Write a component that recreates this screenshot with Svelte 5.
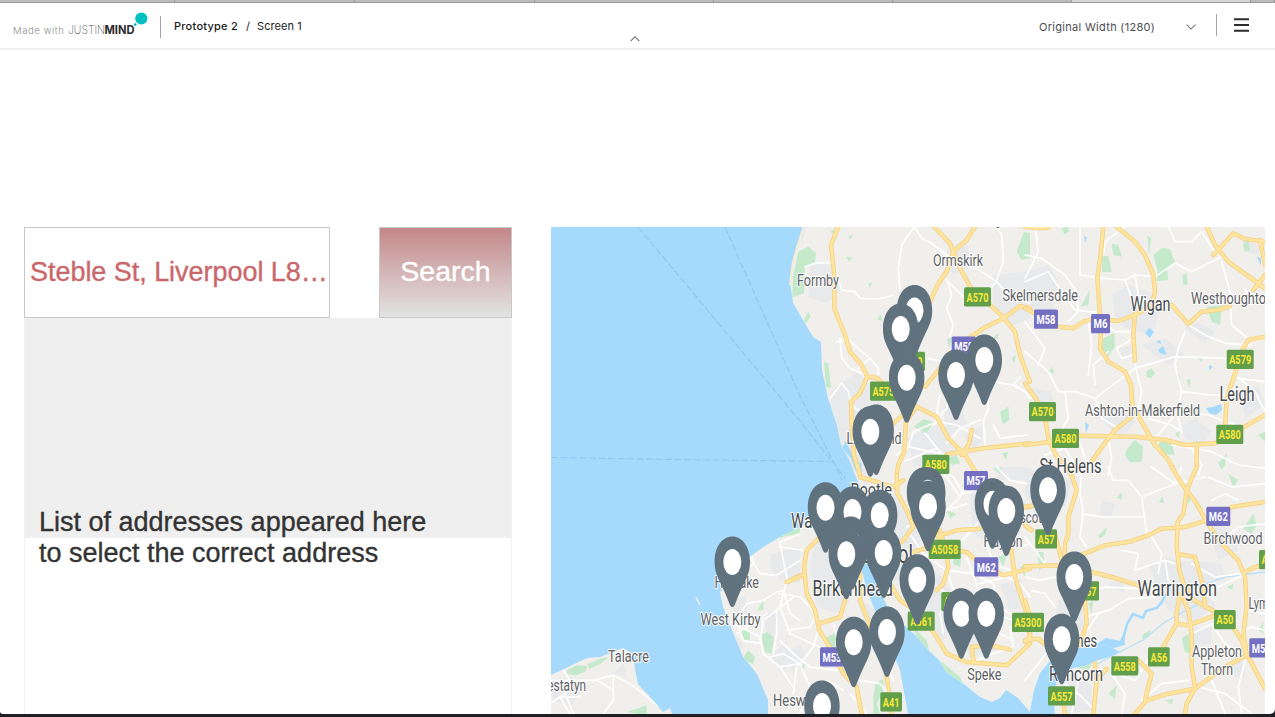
<script>
  const tabs = [175, 180, 180, 179, 179, 179, 179, 24];

  // Pin positions are the centres of the white holes, listed back to front.
  const pins = [
    [914.5, 310.5], [900.7, 329], [906.7, 377.7], [984.3, 360], [956, 375],
    [876.2, 430], [870.3, 431.7],
    [825.5, 507.7], [852.5, 512], [879.7, 515.3],
    [850.7, 542], [852, 544.5], [846.3, 554.3], [883.7, 553],
    [924.5, 492.7], [927.8, 492.7], [928, 506.3],
    [992.5, 503.7], [1006.3, 511], [1048, 490.3], [917.3, 579.7],
    [961.3, 613.7], [986.3, 613.7], [1074.3, 577], [1061.7, 639.3],
    [853.7, 642.3], [887, 632], [822, 706], [732.3, 562]
  ];

  // name, left, baseline, width, size
  const places = [
    ['Burscough', 955, 224.5, 52, 16], ['Formby', 797, 285.5, 42, 17], ['Ormskirk', 933, 266, 50, 17],
    ['Skelmersdale', 1002.5, 300.7, 75.5, 17], ['Westhoughton', 1191, 303.7, 82, 17],
    ['Ashton-in-Makerfield', 1085, 415.7, 115, 17],
    ['Birchwood', 1203.5, 543.7, 59, 17], ['Lymm', 1248.5, 608.5, 30, 17],
    ['Appleton', 1192, 656.5, 50, 17], ['Thorn', 1201, 674.5, 32, 17],
    ['Huyton', 983.5, 546.5, 39, 17], ['Prescot', 1003, 522.5, 39, 17], ['Speke', 967.3, 680, 34, 17],
    ['Heswall', 773, 705.5, 46, 17], ['Litherland', 846.5, 443.5, 55, 17],
    ['Hoylake', 714.5, 587.5, 44.5, 17], ['West Kirby', 700.5, 625, 60, 17],
    ['Talacre', 608, 662, 41, 17], ['Prestatyn', 536, 690.5, 50, 17]
  ];
  const towns = [
    ['Wigan', 1130.5, 310.7, 40, 20], ['Leigh', 1219.5, 401, 35, 20.5], ['St Helens', 1039.5, 473, 62, 19.5],
    ['Warrington', 1137.5, 595.5, 79.5, 22], ['Widnes', 1055, 647, 42, 18.5], ['Runcorn', 1049, 681.3, 54, 19.5],
    ['Birkenhead', 812.5, 595.5, 80.5, 22], ['Bootle', 850.5, 496, 41.5, 18.5], ['Wallasey', 791, 527.5, 60, 20],
    ['Liverpool', 838, 562.5, 75, 26]
  ];

  // label, x, y, width
  const shields = [
    ['A570', 964, 287.3, 27], ['M58', 1034, 309.5, 24], ['M6', 1091, 314, 19], ['A579', 1226.7, 349.7, 27],
    ['A570', 1029, 402, 27], ['A580', 1052, 428.7, 27], ['A580', 1216.3, 424.7, 27], ['M58', 951.7, 336.5, 24],
    ['A59', 903.5, 351.7, 21.5], ['A5758', 870, 381.5, 32], ['A580', 922.3, 454.7, 27], ['M57', 964, 471, 24],
    ['A5058', 928.7, 539.7, 32], ['M62', 974.3, 557.3, 24], ['A561', 907.7, 611.5, 27], ['A562', 941.3, 592, 27],
    ['A5300', 1012, 612.7, 32], ['A41', 880.3, 692.3, 21.7], ['M53', 820, 647.3, 24], ['A57', 1035.3, 529.2, 21.7],
    ['A557', 1072, 581.3, 27], ['A557', 1048, 686.2, 27], ['A558', 1111.3, 656.3, 27], ['A56', 1148, 647.3, 21.7],
    ['A50', 1214, 610, 21.7], ['M62', 1206.3, 506.7, 24], ['M56', 1249.3, 638.3, 24], ['A57', 1259, 550, 21.7]
  ];

  // Each map tile is drawn on its own 750-unit grid.
  const tiles = [
    {
      at: [780, 225],
      urban: ['M90 120L150 110L190 190L140 235L85 215Z', 'M510 60L560 50L575 120L520 150L490 100Z', 'M640 150L740 140L750 280L700 300L640 250Z', 'M150 500L230 440L290 500L330 620L290 750L215 750L165 610Z', 'M490 545L540 530L560 600L500 640Z', 'M380 640L470 600L540 680L480 740L400 720Z', 'M555 630L610 600L605 650L570 690Z', 'M60 0L80 0L65 60Z'],
      green: ['M55 80L85 65L108 85L105 115L75 125L72 205L36 218L40 150Z', 'M70 290L85 258L92 275L78 295Z', 'M132 410L145 415L153 490L138 485Z', 'M150 20L165 12L163 28Z', 'M205 35L220 28L212 43Z', 'M197 95L216 98L207 110Z', 'M265 175L278 172L270 187Z', 'M291 283L302 268L307 288Z', 'M710 80L732 20L750 25L750 100L725 105Z', 'M638 340L653 325L655 343Z', 'M500 345L515 335L510 370Z', 'M660 560L685 545L688 585L668 598Z', 'M400 605L430 583L462 590L440 625Z', 'M695 400L707 390L704 415Z', 'M665 685L685 680L678 705Z', 'M500 700L530 690L540 715L515 720Z'],
      minor: ['M75 125L105 115L160 112L185 195L225 200L240 220L300 222L340 210', 'M405 8L425 40L455 55L500 90', 'M400 8L365 60L355 130L360 190', 'M500 165L515 210L500 250L520 300L510 335', 'M500 90L590 130L650 170L690 215L750 235', 'M500 165L550 215', 'M650 165L670 110L665 30L650 8', 'M650 170L630 190', 'M180 340L185 400L210 430L260 450', 'M170 350L205 345L270 400L295 430L295 480', 'M270 400L235 430', 'M150 520L185 475L205 500L213 540', 'M445 400L490 410L560 430L610 465L700 480L720 455', 'M620 470L625 550L610 590L615 660', 'M350 690L385 665L450 680L510 690', 'M385 665L400 620L470 590L530 600L600 640', 'M500 655L540 610L600 585', 'M435 625L480 680L490 740', 'M640 600L660 640L740 630', 'M370 710L470 670', 'M480 510L470 560L490 600', 'M700 480L735 500L750 520', 'M215 540L260 575L320 590', 'M460 600L500 550L515 490'],
      roads: ['M175 5L153 60L163 150L163 250L195 330L210 380L245 420L262 455L290 458L330 500L410 545L470 575L505 640L555 690L590 745', 'M262 455L240 505L213 530L215 600L222 690L240 750', 'M462 5L510 55L520 80L500 140L475 175L450 230L410 300', 'M585 5L560 45L520 80L540 130L570 185L665 272L705 320L720 390L750 470', 'M410 545L378 590L372 680L355 720L350 750', 'M380 560L340 595', 'M435 485L500 405L530 365L610 310L670 280L720 243L750 250', 'M500 688L610 670L750 655', 'M575 615L568 655L545 690']
    },
    {
      at: [1025, 225],
      urban: ['M0 140L70 120L100 170L80 270L0 250Z', 'M260 210L310 180L370 200L410 250L380 330L300 310L270 270Z', 'M480 310L520 290L570 320L540 355Z', 'M220 580L290 540L330 590L290 640Z', 'M470 600L510 580L560 620L530 660L480 640Z', 'M350 360L420 340L480 390L430 420Z', 'M640 500L700 480L720 540L660 580Z', 'M280 370L320 360L320 400L290 400Z', 'M650 40L700 60L700 90L660 80Z', 'M20 490L80 500L90 545L30 550Z'],
      green: ['M398 140L385 90L410 68L435 72L450 110L425 130L430 165L395 168Z', 'M230 95L250 92L260 140L232 142Z', 'M260 55L280 60L290 95L265 90Z', 'M167 245L195 195L190 240Z', 'M545 245L590 240L585 300L560 290Z', 'M235 340L268 325L270 365L245 400L228 370Z', 'M307 670L330 645L355 665L350 710L315 712L300 690Z', 'M400 655L440 640L448 690L405 685Z', 'M364 440L380 430L390 445L378 460L365 455Z', 'M70 440L82 425L88 445Z', 'M580 715L605 685L600 720L590 735Z', 'M367 30L378 40L372 92Z', 'M654 60L668 40L675 75L660 80Z', 'M472 150L485 145L488 180L475 180Z', 'M110 10L128 5L132 20L118 28Z', 'M450 625L465 618L460 640Z', 'M518 400L530 395L530 412Z', 'M700 630L720 620L720 650Z', 'M485 465L497 462L493 490Z'],
      minor: ['M0 90L50 100L120 150L155 200L160 260L130 290', 'M30 5L40 80L0 160', 'M0 170L70 140L110 200L150 255L215 262', 'M165 150L240 160L300 165L330 150L390 155L450 115L500 140L560 110L600 90', 'M165 150L165 5', 'M300 165L320 220', 'M330 150L340 210L400 250', 'M430 5L450 50L500 50L530 20L570 80', 'M480 320L460 370L450 420L470 500L455 560L470 620', 'M490 300L540 330L600 355L680 360', 'M0 380L70 440L100 500L150 500L210 520L330 430L450 395L610 400', 'M210 480L205 420L250 380', 'M330 410L335 440L350 500L340 550', 'M275 370L325 340L325 390L290 400L275 370', 'M245 300L270 320L330 320', 'M590 110L615 200L620 300L680 350L720 340', 'M660 190L680 240', 'M190 290L200 360L190 450', 'M120 500L130 580L100 630', 'M210 520L230 580L280 610', 'M390 640L460 560L550 570L630 600', 'M470 500L560 510L600 510', 'M250 640L260 700L250 750', 'M160 640L180 700L210 750', 'M440 660L560 680L640 720L720 730', 'M500 670L530 720L520 750', 'M640 460L720 470', 'M300 5L240 50L235 90', 'M0 290L60 370L40 420', 'M620 440L690 500L720 560', 'M60 690L120 670L150 720L160 750', 'M370 580L440 600L470 620'],
      roads: ['M235 5L228 80L217 160L222 230L228 320L225 370L250 410L300 440L318 480L322 540L355 600L390 660L430 705L445 730', 'M275 5L330 50L360 90L385 150L390 200L380 240L330 270L280 288L210 280L175 290L145 310L100 305L40 270L0 250', 'M330 265L325 330L330 408', 'M440 240L490 297L530 260L580 255L615 243', 'M545 5L570 60L610 110L720 190', 'M565 90L625 25L660 42L720 50', 'M705 45L720 120', 'M685 195L720 150', 'M720 335L670 345L655 370L635 430L605 520L600 610', 'M720 570L650 610L570 655L480 660L420 645L330 635L160 632L80 650L0 660', 'M320 575L270 615L235 660L200 710', 'M0 475L35 525L62 590L70 640L95 695L120 720L140 750', 'M515 660L515 726', 'M0 5L40 10L70 8']
    },
    {
      at: [550, 467],
      urban: ['M540 400L590 385L590 440L545 430Z', 'M550 500L580 530L570 560Z', 'M665 260L750 240L750 350L690 340L660 300Z', 'M0 640L60 630L90 680L60 720L10 700Z', 'M640 440L690 430L680 500L650 510Z', 'M660 570L710 520L720 580L700 620Z', 'M190 620L220 590L230 630Z'],
      green: ['M690 210L720 188L750 178L750 200Z', 'M50 610L80 595L112 598L105 615L75 625L52 622Z', 'M112 592L150 575L178 570L150 592L118 605Z', 'M573 485L600 495L600 525L578 520Z', 'M632 505L650 495L672 510L665 560L645 555Z', 'M580 570L595 550L615 570L610 590L590 585Z', 'M622 430L640 400L640 430Z', 'M230 735L290 715L290 740L270 742Z'],
      minor: ['M605 268L612 290L600 300', 'M690 225L750 200', 'M690 225L700 280L712 340', 'M600 270L630 320L680 325L750 280', 'M570 440L590 410L640 400L680 375L705 370', 'M550 470L590 490L630 510L640 560L690 600L735 670', 'M565 480L580 520L630 530L640 460L680 430L730 390', 'M660 570L700 560L750 590', 'M560 500L590 480L650 440', 'M0 640L60 640L130 640L190 625L240 650L330 720', 'M30 640L50 690L70 740', 'M60 740L30 690L90 690', 'M190 625L190 700L160 740', 'M140 640L190 670', 'M0 710L45 680L60 640L40 610', 'M700 370L720 440L750 460', 'M730 680L740 600L750 590', 'M680 430L680 500L670 560'],
      roads: ['M712 345L750 325']
    },
    {
      at: [780, 467],
      urban: ['M110 200L160 250L190 330L210 400L180 440L110 420L90 300Z', 'M250 40L330 60L370 120L420 180L420 300L390 350L320 330L270 250Z', 'M570 80L690 70L720 200L650 240L580 200Z', 'M430 300L490 330L540 430L490 520L430 450Z', 'M230 400L280 420L330 560L320 670L290 560Z', 'M540 500L640 500L650 550L570 570Z', 'M640 0L740 0L740 40L660 40Z', 'M20 560L60 530L80 570L40 620Z', 'M660 350L720 340L740 420L690 430Z'],
      green: ['M130 515L170 495L165 550L150 570Z', 'M280 690L285 650L310 635L310 670L290 710L300 740L280 740Z', 'M480 580L540 630L555 665L500 620Z', 'M400 480L440 520L450 560L410 510Z', 'M520 270L545 265L540 300L520 290Z', 'M720 300L740 290L735 330Z', 'M655 270L680 260L670 300Z', 'M0 195L30 190L20 205L0 215Z', 'M640 5L665 0L660 20Z', 'M60 600L75 590L70 615Z', 'M500 130L530 140L510 155Z'],
      minor: ['M0 240L70 250', 'M0 380L60 390L110 440L90 480L20 490', 'M20 340L0 420L30 500L120 540', 'M120 470L100 540L60 590L0 600', 'M60 590L90 660L60 740', 'M160 470L180 550L240 560', 'M0 520L40 560L90 600L170 610', 'M250 430L300 560L340 640', 'M240 640L300 650L345 700', 'M390 200L430 260L500 310L580 320L640 350', 'M500 310L520 370L480 440L490 500', 'M530 240L600 160L640 180L700 180', 'M500 130L540 90L560 60L620 50', 'M380 180L440 150L560 110', 'M540 90L500 30L470 0', 'M560 270L600 380L640 440L700 460', 'M640 350L660 420L720 460', 'M530 500L600 480L660 500L700 520', 'M600 350L680 330L720 350L750 390', 'M430 330L500 380', 'M720 240L750 230', 'M690 480L700 540L640 560L590 580', 'M210 680L260 740', 'M140 640L190 670', 'M620 230L640 290L690 310', 'M470 0L520 30L550 80L610 60', 'M650 0L690 40L740 50'],
      roads: ['M20 345L70 325', 'M130 200L80 250L72 300L80 380L105 430L118 490L155 550L190 620L230 660L245 740', 'M118 470L180 450L195 400', 'M240 400L260 450L285 520L315 600L330 690L335 740', 'M240 400L240 310', 'M350 24L352 80L380 130L400 180L370 220L340 240', 'M320 330L360 400L420 440L470 510L500 560L560 585L680 595L750 530', 'M470 370L490 350L505 300L495 240L480 190', 'M400 255L450 240L560 255L600 290L670 325L750 305', 'M480 205L530 190L600 185', 'M580 580L575 540L630 535L690 548', 'M690 220L705 330L740 440L750 510', 'M590 19L640 70L700 90', 'M730 120L750 120', 'M240 30L340 60L370 40', 'M460 110L470 200L490 240']
    },
    {
      at: [1025, 467],
      urban: ['M0 0L80 30L140 40L120 120L0 90Z', 'M370 300L430 270L540 300L570 420L500 470L430 430Z', 'M450 320L500 280L590 290L600 340L500 350Z', 'M100 400L170 410L180 490L90 500Z', 'M80 640L150 620L200 660L200 730L130 740Z', 'M540 150L620 190L640 250L580 280Z', 'M620 590L650 580L660 630L630 630Z', 'M250 350L290 330L300 380Z', 'M230 100L270 110L260 150L225 145Z', 'M490 480L560 480L560 530L500 540Z'],
      green: ['M275 92L290 75L290 98Z', 'M402 105L412 88L418 108Z', 'M220 205L245 180L240 205L222 215Z', 'M38 255L55 255L58 295L42 310Z', 'M655 185L685 140L695 175L680 200Z', 'M470 515L490 500L500 560L480 555Z', 'M250 680L275 655L270 695Z', 'M605 360L625 350L622 370Z', 'M420 700L445 695L440 712Z', 'M700 490L715 465L715 500Z', 'M355 500L378 490L370 510L350 515Z', 'M190 410L205 400L200 440Z', 'M150 600L200 590L190 610Z', 'M480 75L500 85L490 115Z', 'M610 20L640 40L625 60Z'],
      minor: ['M170 0L165 80L175 140L165 210L185 240', 'M170 140L230 150L360 150', 'M250 0L265 40L310 40L350 90L365 200', 'M350 90L450 50L470 0', 'M290 250L340 260L330 310L420 280L450 290', 'M185 380L240 360L340 365', 'M380 210L410 260L400 320', 'M180 450L250 430L310 395L390 390', 'M550 30L620 60L720 50', 'M560 100L600 80L640 100', 'M600 210L640 180L720 170', 'M500 290L570 330L650 320', 'M540 380L600 350L660 320', 'M380 560L330 640L270 620', 'M260 620L300 680L290 740', 'M350 700L410 650L490 640', 'M500 500L560 470L600 530L650 560', 'M520 660L600 680L680 740', 'M560 640L600 740', 'M120 240L90 220', 'M0 210L60 290', 'M0 330L40 340L90 330', 'M20 370L60 380L90 420', 'M180 500L220 440L260 425', 'M120 650L160 680L200 720', 'M140 740L160 640L220 640', 'M420 280L430 340L470 380L460 430', 'M450 360L510 360L570 400', 'M660 430L720 440', 'M640 500L680 480L720 490', 'M380 0L450 50L540 30', 'M0 640L40 590L70 550', 'M660 580L640 660L650 740'],
      roads: ['M440 0L470 50L515 110L545 165L590 230L640 280L660 330L665 420L655 500L665 560L720 665', 'M515 0L485 70L475 140L458 165L455 240L463 310L475 350L490 370', 'M0 120L50 110', 'M720 105L620 120L545 160L480 180L410 185L370 205L310 225L240 235L165 265L110 295L0 298', 'M140 25L155 70L130 150L130 200L120 230L118 290', 'M200 315L260 330L340 355', 'M463 262L510 270L535 360L540 420L565 430', 'M465 380L455 440L455 470L490 475L570 445L620 475L650 520L665 565', 'M470 385L490 430L500 500L500 600L510 660', 'M500 395L580 440', 'M665 565L600 600L510 665L430 680L365 700L330 740', 'M455 470L420 530L405 560', 'M340 580L380 620L360 700', 'M660 315L690 300L720 295', 'M180 400L185 470L165 530L210 590L215 640L205 740', 'M0 400L15 450L15 510L0 525', 'M0 520L40 515L70 540', 'M245 605L215 640', 'M20 190L0 175', 'M90 200L110 280', 'M110 680L120 740', 'M510 665L485 710L480 740']
    }
  ];
</script>

<div class="window">
  <div class="tabstrip">
    {#each tabs as w, i}
      <div class="tab" class:active={i === 6} style="width:{w}px"></div>
    {/each}
  </div>

  <header>
    <span class="made">Made with</span>
    <svg class="logo" width="82" height="30" viewBox="0 0 82 30">
      <text x="0" y="23.500" font-weight="200" fill="#555" font-size="12" textLength="37" lengthAdjust="spacingAndGlyphs">JUSTIN</text>
      <text x="36.500" y="23.500" font-weight="700" fill="#2c2c2c" font-size="12" textLength="30" lengthAdjust="spacingAndGlyphs">MIND</text>
      <circle cx="73.300" cy="8.500" r="6.100" fill="#00c0c0" />
      <circle cx="67.200" cy="14.600" r="1.400" fill="#00c0c0" />
    </svg>
    <i class="rule left"></i>
    <span class="crumb strong">Prototype 2</span>
    <span class="slash">/</span>
    <span class="crumb">Screen 1</span>
    <svg class="collapse" width="12" height="8" viewBox="0 0 12 8"><path d="M1.6 6.2L6 1.8L10.4 6.2" /></svg>
    <span class="zoomlevel">Original Width (1280)</span>
    <svg class="drop" width="12" height="8" viewBox="0 0 12 8"><path d="M1.5 1.7L6 6.1L10.5 1.7" /></svg>
    <i class="rule right"></i>
    <svg class="burger" width="15" height="14" viewBox="0 0 15 14"><path d="M0 1.2H15M0 7H15M0 12.8H15" /></svg>
  </header>

  <main>
    <section class="finder">
      <div class="search">
        <div class="field">Steble St, Liverpool L8…</div>
        <button>Search</button>
      </div>
      <div class="results">
        <p>List of addresses appeared here<br />to select the correct address</p>
      </div>
    </section>

    <svg class="map" width="714" height="487" viewBox="551 227 714 487">
      <defs>
        <g id="pin">
          <path d="M0 45C-1.500 45-2.200 43.500-3 41.500C-6 33-10 25-14 16.500C-17 10-17.700 5-17.700 0C-17.700-15-10.300-25.500 0-25.500C10.300-25.500 17.700-15 17.700 0C17.700 5 17 10 14 16.500C10 25 6 33 3 41.500C2.200 43.500 1.500 45 0 45Z" fill="#61727f" />
          <ellipse rx="9" ry="13" fill="#fff" />
        </g>
        <clipPath id="land">
          <path d="M804 227L798 246L793 264L790.500 285L793 303L803 320L813 337L821 342L822 370L828 398L837 425L841 445L850 461L855 475L862 490L866 520L868 550L877 585L890 612L903 624L915 635L928 650L939 660L946 672L965 685L980 697L992 702L1000 698L1006 690L1018 698L1030 712L1034 690L1040 673L1050 661L1065 650L1082 647L1096 648L1105 644L1120 652L1110 657L1098 660L1085 666L1073 668L1058 678L1053 695L1055 714L1265 714V227Z
            M768 714V700L757 674L743 657L732 630L723 607L720 592L735 573L751 556L763 547L780 537L800 527L815 517L835 520L850 535L858 550L860 565L868 593L879 620L892 650L900 670L908 714Z
            M551 675L566 668L587 658L600 657L623 648L633 654L635 669L638 684L650 697L663 712L670 708L672 714H551Z" />
        </clipPath>
      </defs>
      <rect x="551" y="227" width="714" height="487" fill="#a5dafc" />
      <path d="M804 227L798 246L793 264L790.500 285" fill="none" stroke="#f8edcf" stroke-width="3" />
      <g clip-path="url(#land)">
        <rect x="551" y="227" width="714" height="487" fill="#f0efeb" />
        {#each tiles as t}
          <g transform="translate({t.at[0]} {t.at[1]}) scale(.33333)">
            {#each t.urban as d}<path {d} fill="#e8e9eb" />{/each}
            {#each t.green as d}<path {d} fill="#c4eacb" />{/each}
          </g>
        {/each}
        <g fill="#a5dafc">
          <path d="M1145 333L1149 328L1154 332L1150 338Z M1156 342L1160 340L1161 344Z M1158 350L1163 346L1167 355L1160 353Z M1206 408L1213 407L1221 404L1222 410L1216 415L1209 413Z M1085 422L1089 425L1086 433Z M1178 372L1180 380L1178 382Z M1209 365L1213 367L1209 370Z M1084 235L1087 238L1085 243Z M1257 257L1261 258L1261 266Z M842 448L846 441L850 450L855 460L861 463L862 472L855 470L851 458Z" />
          <path d="M1090 648L1106 638L1120 641L1124 632L1125 645L1107 650Z" />
        </g>
        <path d="M1123 640L1127 624L1133 614L1143 618L1146 611L1157 608L1161 603L1166 594" fill="none" stroke="#a5dafc" stroke-width="2.500" />
        <path d="M1095 665L1143 640L1165 622L1206 600M1190 590L1225 577L1265 572" fill="none" stroke="#b9e0f7" stroke-width="1.300" />
        {#each tiles as t}
          <g class="lines" transform="translate({t.at[0]} {t.at[1]}) scale(.33333)">
            {#each t.minor as d}<path {d} stroke="#fff" stroke-width="5" />{/each}
          </g>
        {/each}
        {#each tiles as t}
          <g class="lines" transform="translate({t.at[0]} {t.at[1]}) scale(.33333)">
            {#each t.roads as d}<path {d} stroke="#f5d284" stroke-width="13.500" />{/each}
            {#each t.roads as d}<path {d} stroke="#ffe59f" stroke-width="8" />{/each}
          </g>
        {/each}
      </g>
      <path d="M696 597L700 605" stroke="#e6f0ee" stroke-width="1.500" />
      <g fill="none" stroke="#8fbff0" stroke-width="1.200" stroke-dasharray="7 2.500" opacity=".7">
        <path d="M638 227L800 421L845 478" />
        <path d="M725 227L800 396L835 465L842 480" />
        <path d="M551 457.500L660 459.300L830 461.500" />
      </g>

      <g class="label">
        {#each places as [name, x, y, w, size]}
          <text {x} {y} font-size={size} textLength={w} lengthAdjust="spacingAndGlyphs">{name}</text>
        {/each}
      </g>
      <g class="label town">
        {#each towns as [name, x, y, w, size]}
          <text {x} {y} font-size={size} textLength={w} lengthAdjust="spacingAndGlyphs">{name}</text>
        {/each}
      </g>
      {#each shields as [name, x, y, w]}
        <rect {x} {y} width={w} height="19.200" rx="1.500" fill={name[0] === 'M' ? '#7370c4' : '#629f4b'} />
        <text class="road" x={x + 2.500} y={y + 14.300} textLength={w - 5} lengthAdjust="spacingAndGlyphs" fill={name[0] === 'M' ? '#fff' : '#f8e83c'}>{name}</text>
      {/each}
      {#each pins as [x, y]}
        <use href="#pin" {x} {y} />
      {/each}
    </svg>
  </main>
  <footer></footer>
</div>

<style>
  :global(body) { margin: 0; overflow: hidden; }
  .window {
    width: 1275px; height: 717px; overflow: hidden; display: flex; flex-direction: column;
    background: #202024; font-family: "Liberation Sans", Arial, sans-serif;
  }
  .tabstrip { display: flex; height: 3px; flex: none; background: #bbb9bc; border-bottom: 1px solid #9b999c; box-sizing: border-box; }
  .tab { box-sizing: border-box; border-right: 1px solid #98969a; flex: none; }
  .tab.active { background: #d6d6d8; }
  header {
    height: 47px; flex: none; box-sizing: border-box; display: flex; align-items: flex-start;
    background: #fff; border-bottom: 2px solid #efefef; font-family: Inter, sans-serif; font-size: 11px; color: #1b1b1b;
    line-height: 14px; white-space: nowrap;
  }
  .made { margin: 21px 0 0 13px; width: 55px; font-size: 9.5px; font-weight: 300; color: #8b8b8b; letter-spacing: .6px; }
  .logo { margin-top: 7px; font-family: Inter, sans-serif; }
  .rule { width: 1px; height: 22px; background: #a2a2a6; flex: none; }
  .rule.left { margin: 13px 13px 0 10px; }
  .rule.right { margin: 11px 17px 0 19px; }
  .crumb { margin-top: 16px; }
  .crumb.strong { font-weight: 500; width: 72px; letter-spacing: .25px; }
  .slash { margin-top: 16px; width: 11px; }
  .collapse { margin: 32px 0 0 327px; }
  .crumb:not(.strong) { width: 45px; letter-spacing: .08px; }
  .zoomlevel { margin: 17px 0 0 398px; width: 146px; color: #4d4d50; letter-spacing: .3px; }
  .drop { margin-top: 20px; }
  .collapse path, .drop path { fill: none; stroke: #77777b; stroke-width: 1.1; }
  .burger { margin-top: 15px; }
  .burger path { stroke: #2c2c2c; stroke-width: 2; }
  main {
    flex: 1; min-height: 0; display: flex; background: #fff; padding: 177px 10px 0 24px;
    justify-content: space-between; border-radius: 0 0 5px 3px;
  }
  .finder { width: 488px; display: flex; flex-direction: column; }
  .search { display: flex; justify-content: space-between; height: 91px; flex: none; }
  .field, button { box-sizing: border-box; border: 1px solid #c8c8c8; height: 91px; line-height: 88px; }
  .field {
    width: 306px; padding-left: 5px; font-size: 27px; letter-spacing: -.04px; color: #c9676b; white-space: nowrap;
    -webkit-text-stroke: .35px #c9676b;
  }
  button {
    width: 133px; padding: 0 0 4px; font: 28.5px/84px "Liberation Sans", Arial, sans-serif; color: #fff;
    -webkit-text-stroke: .35px #fff; background: linear-gradient(#c48889, #e3e3e3);
  }
  .results {
    flex: 1; box-sizing: border-box; border: 1px solid #f1f1f1; border-width: 0 1px;
    background: linear-gradient(#efefef 220px, #fff 220px); padding: 189px 0 0 14px;
  }
  p { margin: 0; font-size: 27px; line-height: 31px; color: #333; white-space: nowrap; -webkit-text-stroke: .35px #333; }
  .map { display: block; flex: none; }
  .lines { fill: none; stroke-linecap: round; stroke-linejoin: round; }
  .label { font-family: Roboto, sans-serif; fill: #5d6064; paint-order: stroke; stroke: #fff; stroke-width: 2.2px; stroke-linejoin: round; }
  .town { fill: #45484b; }
  .road { font: 700 13px Roboto, sans-serif; }
  footer { height: 3px; flex: none; }
</style>
